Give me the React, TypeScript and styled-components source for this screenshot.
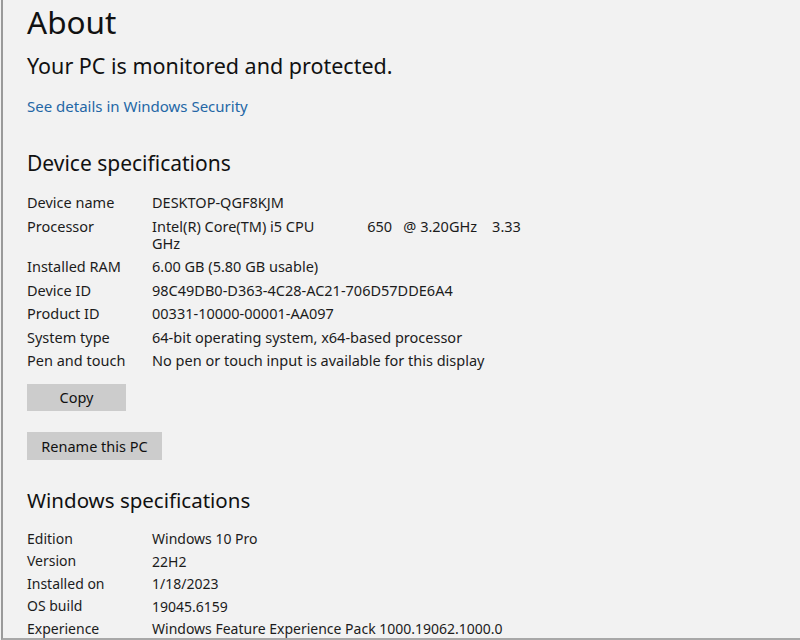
import { Fragment } from 'react'
import styled, { createGlobalStyle } from 'styled-components'

const GlobalStyle = createGlobalStyle`
  html, body {
    margin: 0;
    padding: 0;
    background: #f2f2f2;
  }
  body {
    font-family: 'Noto Sans', 'Open Sans', sans-serif;
    color: #111;
  }
`

const Frame = styled.div`
  box-sizing: border-box;
  width: 800px;
  height: 640px;
  overflow: hidden;
  background: #f2f2f2;
  border-left: 2px solid #9a9a9a;
  border-bottom: 2px solid #a8a8a8;
  margin-left: 1px;
  padding: 3px 0 0 24px;
  display: flex;
  flex-direction: column;
  align-items: flex-start;

  & > * {
    flex-shrink: 0;
  }
`

const Title = styled.h1`
  margin: 0;
  font-size: 31.5px;
  font-weight: 400;
  line-height: 38px;
  color: #111;
`

const Status = styled.div`
  margin-top: 12px;
  font-size: 21.5px;
  line-height: 26px;
  color: #111;
`

const Link = styled.a`
  margin-top: 17px;
  font-size: 15px;
  line-height: 20px;
  color: #2467a6;
  text-decoration: none;
  cursor: pointer;
`

const SectionTitle = styled.h2<{ $gap: number; $size: number }>`
  margin: ${(p) => p.$gap}px 0 0;
  font-size: ${(p) => p.$size}px;
  font-weight: 400;
  line-height: 28px;
  color: #111;
`

const SpecList = styled.dl<{ $pitch: number; $size: number }>`
  margin: 14px 0 0;
  display: grid;
  grid-template-columns: 125px 372px;
  font-size: ${(p) => p.$size}px;
  line-height: ${(p) => p.$pitch}px;
  color: #1c1c1c;
`

const Label = styled.dt`
  margin: 0;
`

// wrapped values keep a tighter line, padded out to the row pitch
const Value = styled.dd<{ $pitch: number }>`
  margin: 0;
  white-space: pre-wrap;
  line-height: 17px;
  padding: ${(p) => (p.$pitch - 17) / 2}px 0;
`

const Button = styled.button<{ $width: number; $height: number; $gap: number }>`
  margin-top: ${(p) => p.$gap}px;
  width: ${(p) => p.$width}px;
  height: ${(p) => p.$height}px;
  border: none;
  background: #cccccc;
  font-family: inherit;
  font-size: 14.5px;
  color: #111;
  padding: 0;
`

const deviceSpecs: [string, string][] = [
  ['Device name', 'DESKTOP-QGF8KJM'],
  ['Processor', 'Intel(R) Core(TM) i5 CPU              650   @ 3.20GHz    3.33 GHz'],
  ['Installed RAM', '6.00 GB (5.80 GB usable)'],
  ['Device ID', '98C49DB0-D363-4C28-AC21-706D57DDE6A4'],
  ['Product ID', '00331-10000-00001-AA097'],
  ['System type', '64-bit operating system, x64-based processor'],
  ['Pen and touch', 'No pen or touch input is available for this display'],
]

const windowsSpecs: [string, string][] = [
  ['Edition', 'Windows 10 Pro'],
  ['Version', '22H2'],
  ['Installed on', '1/18/2023'],
  ['OS build', '19045.6159'],
  ['Experience', 'Windows Feature Experience Pack 1000.19062.1000.0'],
]

interface SpecsProps {
  rows: [string, string][]
  pitch: number
  size: number
}

function Specs({ rows, pitch, size }: SpecsProps) {
  return (
    <SpecList $pitch={pitch} $size={size}>
      {rows.map(([label, value]) => (
        <Fragment key={label}>
          <Label>{label}</Label>
          <Value $pitch={pitch}>{value}</Value>
        </Fragment>
      ))}
    </SpecList>
  )
}

function App() {
  return (
    <>
      <GlobalStyle />
      <Frame>
        <Title>About</Title>
        <Status>Your PC is monitored and protected.</Status>
        <Link>See details in Windows Security</Link>
        <SectionTitle $gap={33} $size={21}>Device specifications</SectionTitle>
        <Specs rows={deviceSpecs} pitch={23.5} size={14.5} />
        <Button $width={99} $height={27} $gap={11}>Copy</Button>
        <Button $width={135} $height={28} $gap={21}>Rename this PC</Button>
        <SectionTitle $gap={26} $size={20.5}>Windows specifications</SectionTitle>
        <Specs rows={windowsSpecs} pitch={22.5} size={14} />
      </Frame>
    </>
  )
}

export default App
